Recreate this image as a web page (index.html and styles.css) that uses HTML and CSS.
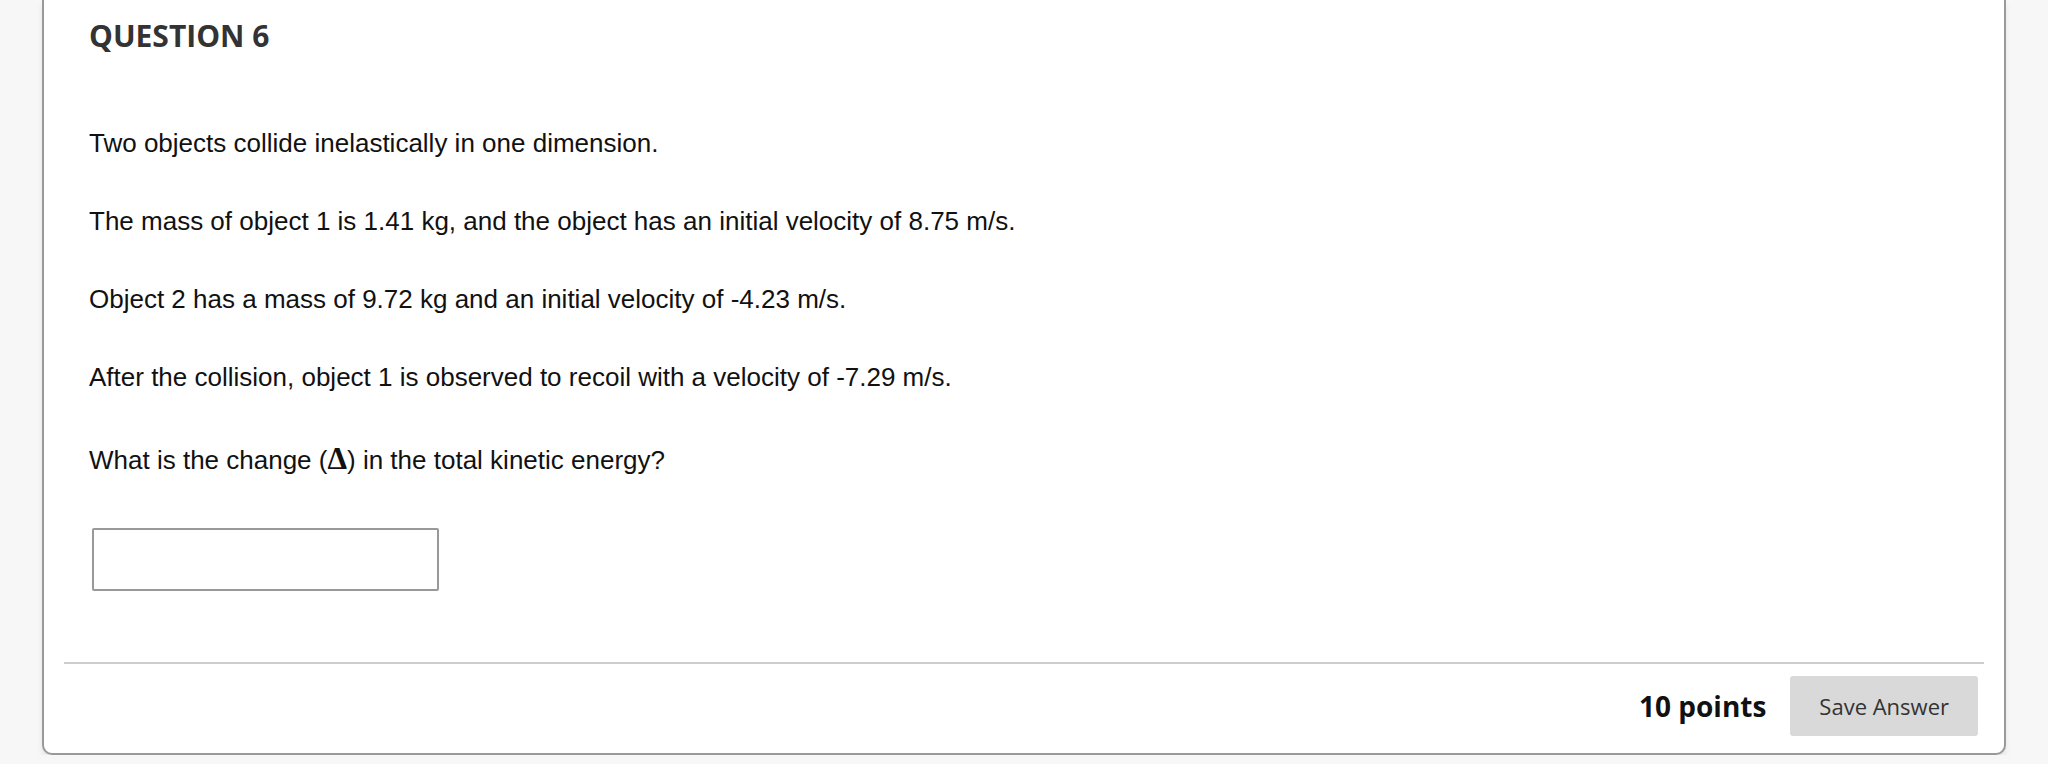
FILE: index.html
```html
<!DOCTYPE html>
<html lang="en">
<head>
    <meta charset="UTF-8">
    <meta name="viewport" content="width=device-width, initial-scale=1.0">
    <title>Question 6</title>
    <link rel="stylesheet" href="styles.css">
</head>
<body>

    <div class="page">
        <div class="question">
            <div class="question-body">
                <h2>QUESTION 6</h2>

                <div class="question-text">
                    <p>Two objects collide inelastically in one dimension.</p>
                    <p>The mass of object 1 is 1.41 kg, and the object has an initial velocity of 8.75 m/s.</p>
                    <p>Object 2 has a mass of 9.72 kg and an initial velocity of -4.23 m/s.</p>
                    <p>After the collision, object 1 is observed to recoil with a velocity of -7.29 m/s.</p>
                    <p class="prompt">What is the change (<span class="delta">&Delta;</span>) in the total kinetic energy?</p>
                </div>

                <input class="answer" type="text" aria-label="Answer">
            </div>

            <div class="question-footer">
                <span class="points">10 points</span>
                <button class="save-btn">Save Answer</button>
            </div>
        </div>
    </div>

</body>
</html>
```

FILE: styles.css
```css
body {
    margin: 0;
    background-color: #f7f7f7;
    font-family: "Liberation Sans", Arial, sans-serif;
    color: #111;
}

.page {
    padding: 0 42px;
}

.question {
    background-color: #fff;
    border: 2px solid #999;
    border-top: none;
    border-radius: 0 0 10px 10px;
    box-shadow: 0 4px 6px rgba(0,0,0,0.08);
}

.question-body {
    padding: 15px 46px 71px 45px;
}

.question h2 {
    margin: 0;
    font-family: "Open Sans", sans-serif;
    font-size: 30px;
    font-weight: bold;
    line-height: 41px;
    color: #333;
}

.question-text {
    margin-top: 68px;
}

.question-text p {
    margin: 0 0 39px 0;
    font-size: 26px;
    line-height: 39px;
}

.question-text p.prompt {
    padding-top: 5px;
    margin-bottom: 48px;
}

.delta {
    font-family: "Liberation Serif", "Times New Roman", serif;
    font-weight: bold;
    font-size: 1.2em;
    line-height: 1;
}

.answer {
    display: block;
    box-sizing: border-box;
    width: 347px;
    height: 63px;
    margin: 0 0 0 3px;
    border: 2px solid #999;
    border-radius: 2px;
    background-color: #fff;
}

.question-footer {
    margin: 0 20px;
    border-top: 2px solid #cdcdcd;
    padding: 12px 6px 17px 0;
    display: flex;
    justify-content: flex-end;
    align-items: center;
    gap: 24px;
}

.points {
    font-family: "Open Sans", sans-serif;
    font-size: 28px;
    font-weight: bold;
    color: #111;
}

.save-btn {
    height: 60px;
    padding: 0 29px;
    border: none;
    border-radius: 3px;
    background-color: #d9d9d9;
    font-family: "Open Sans", sans-serif;
    font-size: 22px;
    color: #333;
    cursor: pointer;
}
```
